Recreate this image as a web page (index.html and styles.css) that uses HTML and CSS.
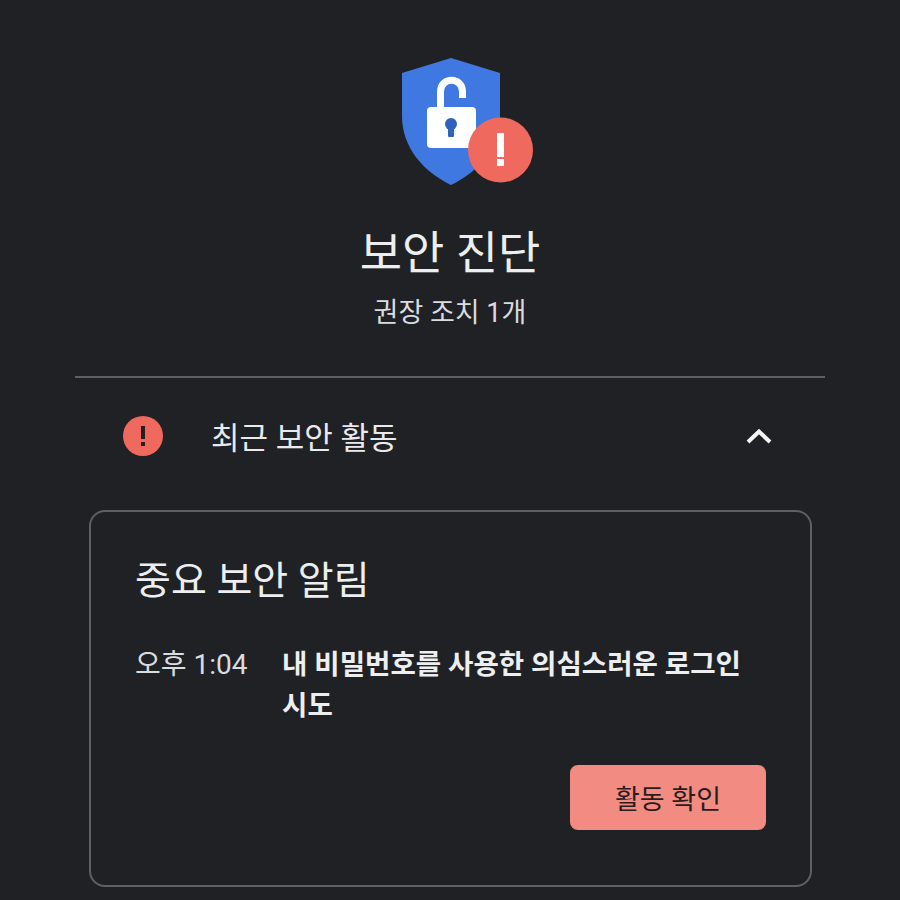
FILE: index.html
```html
<!DOCTYPE html>
<html lang="ko">
<head>
  <meta charset="UTF-8">
  <meta name="viewport" content="width=device-width, initial-scale=1.0">
  <title>보안 진단</title>
  <link rel="stylesheet" href="styles.css">
</head>
<body>

<div class="page">
  <div class="summary">
    <svg class="shield" width="132" height="128" viewBox="0 0 132 128">
      <path d="M49 0 L98 15 V58 C98 90 76 114 49 127 C22 114 0 90 0 58 V15 Z" fill="#3f78e0"/>
      <path d="M38.500 49 V33.500 C38.500 18.500 60.500 18.500 60.500 33.500 V40" fill="none" stroke="#fff" stroke-width="7"/>
      <rect x="25" y="49" width="49" height="41" rx="4" fill="#fff"/>
      <circle cx="49" cy="66" r="6" fill="#2f62ba"/>
      <rect x="46" y="67" width="6" height="12" rx="1" fill="#2f62ba"/>
      <circle cx="98.500" cy="92" r="32.500" fill="#f0695f"/>
      <rect x="95" y="75" width="7" height="24" fill="#fff"/>
      <rect x="95" y="101" width="7" height="7" fill="#fff"/>
    </svg>
    <h1 class="title">보안 진단</h1>
    <p class="subtitle">권장 조치 1개</p>
  </div>

  <div class="section-row">
    <svg class="alert-icon" width="40" height="40" viewBox="0 0 40 40">
      <circle cx="20" cy="20" r="20" fill="#f0695f"/>
      <rect x="18" y="10" width="4" height="13" fill="#2a1c1d"/>
      <rect x="18" y="26" width="4" height="4" fill="#2a1c1d"/>
    </svg>
    <span class="section-label">최근 보안 활동</span>
    <svg class="chevron" width="26" height="16" viewBox="0 0 26 16">
      <path d="M2 14 L13 3.500 L24 14" fill="none" stroke="#f4f4f5" stroke-width="4"/>
    </svg>
  </div>

  <div class="card">
    <h2 class="card-title">중요 보안 알림</h2>
    <div class="event">
      <span class="event-time">오후 1:04</span>
      <span class="event-text">내 비밀번호를 사용한 의심스러운 로그인 시도</span>
    </div>
    <div class="card-actions">
      <button class="check-btn">활동 확인</button>
    </div>
  </div>
</div>

</body>
</html>
```

FILE: styles.css
```css
* {
  box-sizing: border-box;
}

body {
  margin: 0;
  height: 900px;
  overflow: hidden;
  background-color: #202124;
  color: #e8eaed;
  font-family: Roboto, "Noto Sans CJK KR", sans-serif;
}

.page {
  width: 750px;
  margin: 0 auto;
  padding-top: 58px;
}

.summary {
  display: flex;
  flex-direction: column;
  align-items: center;
  height: 320px;
  border-bottom: 2px solid #5f6063;
}

.shield {
  display: block;
  margin-left: 36px;
}

.title {
  margin: 35px 0 0;
  font-size: 46px;
  line-height: 64px;
  font-weight: 400;
  color: #eceef0;
}

.subtitle {
  margin: 9px 0 0;
  font-size: 27px;
  line-height: 38px;
  color: #dadce0;
}

.section-row {
  display: flex;
  align-items: center;
  height: 116px;
  padding: 0 53px 0 48px;
}

.section-label {
  flex: 1;
  margin-left: 48px;
  margin-bottom: 2px;
  font-size: 31px;
  color: #e8eaed;
}

.card {
  margin: 16px 13px 0 14px;
  height: 377px;
  padding: 43px 44px 0;
  border: 2px solid #5f6063;
  border-radius: 16px;
}

.card-title {
  margin: 0;
  font-size: 39px;
  line-height: 52px;
  font-weight: 400;
  color: #eceef0;
}

.event {
  display: flex;
  margin-top: 37px;
}

.event-time {
  flex: none;
  width: 147px;
  font-size: 28px;
  line-height: 41px;
  color: #dadce0;
}

.event-text {
  font-size: 27.600px;
  line-height: 41px;
  font-weight: 700;
  word-break: keep-all;
  color: #eceef0;
}

.card-actions {
  display: flex;
  justify-content: flex-end;
  margin-top: 39px;
}

.check-btn {
  width: 196px;
  height: 65px;
  border: none;
  border-radius: 8px;
  background-color: #f28b82;
  color: #2a1c1d;
  font-family: inherit;
  font-size: 27px;
}
```
